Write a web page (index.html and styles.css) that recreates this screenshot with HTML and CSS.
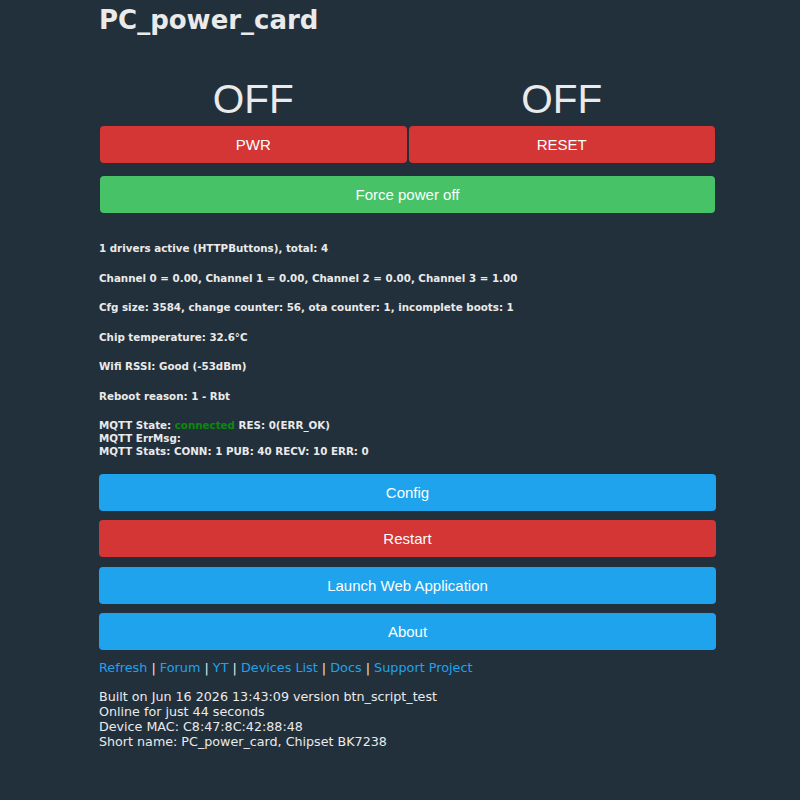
FILE: index.html
```html
<!DOCTYPE html>
<html>
<head>
<meta charset="utf-8">
<link rel="stylesheet" href="styles.css">
</head>
<body>
<div class="wrap">
  <h3 class="title">PC_power_card</h3>
  <div class="states">
    <div class="cell">
      <div class="state">OFF</div>
      <button class="btn red">PWR</button>
    </div>
    <div class="cell">
      <div class="state">OFF</div>
      <button class="btn red">RESET</button>
    </div>
  </div>
  <button class="btn green force">Force power off</button>
  <div class="info">
    <p>1 drivers active (HTTPButtons), total: 4</p>
    <p>Channel 0 = 0.00, Channel 1 = 0.00, Channel 2 = 0.00, Channel 3 = 1.00</p>
    <p>Cfg size: 3584, change counter: 56, ota counter: 1, incomplete boots: 1</p>
    <p>Chip temperature: 32.6°C</p>
    <p>Wifi RSSI: Good (-53dBm)</p>
    <p>Reboot reason: 1 - Rbt</p>
    <p>MQTT State: <span class="ok">connected</span> RES: 0(ERR_OK)<br>MQTT ErrMsg: <br>MQTT Stats: CONN: 1 PUB: 40 RECV: 10 ERR: 0</p>
  </div>
  <div class="menu">
    <button class="btn blue">Config</button>
    <button class="btn red">Restart</button>
    <button class="btn blue">Launch Web Application</button>
    <button class="btn blue">About</button>
  </div>
  <div class="links">
    <a href="#">Refresh</a> | <a href="#">Forum</a> | <a href="#">YT</a> | <a href="#">Devices List</a> | <a href="#">Docs</a> | <a href="#">Support Project</a>
  </div>
  <div class="footer">
    Built on Jun 16 2026 13:43:09 version btn_script_test<br>
    Online for just 44 seconds<br>
    Device MAC: C8:47:8C:42:88:48<br>
    Short name: PC_power_card, Chipset BK7238
  </div>
</div>
</body>
</html>
```
FILE: styles.css
```css
html, body {
  margin: 0;
  padding: 0;
  background: #22303c;
}
body {
  color: #eaeaea;
  font-family: "DejaVu Sans", Verdana, sans-serif;
}
.wrap {
  width: 617px;
  margin-left: 99px;
  padding-top: 4px;
}
.title {
  margin: 0;
  font-size: 26px;
  font-weight: bold;
  line-height: 32px;
  color: #eaeaea;
}
.states {
  display: grid;
  grid-template-columns: 1fr 1fr;
  gap: 2px;
  margin-top: 38px;
  padding: 0 1px;
}
.cell {
  display: flex;
  flex-direction: column;
  align-items: stretch;
}
.state {
  font-family: "Liberation Sans", Arial, sans-serif;
  font-size: 40.5px;
  line-height: 50px;
  text-align: center;
  color: #eaeaea;
  margin-bottom: 2px;
}
.btn {
  display: block;
  width: 100%;
  height: 37px;
  border: 0;
  border-radius: 4px;
  color: #faffff;
  font-family: "Liberation Sans", Arial, sans-serif;
  font-size: 15px;
  padding: 0;
  cursor: pointer;
}
.red { background: #d43535; }
.green { background: #47c266; }
.blue { background: #1fa3ec; }
.force {
  width: 615px;
  margin: 13px 1px 0;
}
.info {
  margin-top: 29px;
  font-size: 10.3px;
  font-weight: bold;
  line-height: 13px;
}
.info p {
  margin: 0 0 16.5px;
}
.ok { color: #0a8a0a; }
.menu {
  display: flex;
  flex-direction: column;
  gap: 9.5px;
  margin-top: -1px;
}
.links {
  margin-top: 10px;
  font-size: 12.8px;
  line-height: 16px;
}
.links a {
  color: #1fa3ec;
  text-decoration: none;
}
.footer {
  margin-top: 13px;
  font-size: 12.7px;
  line-height: 15px;
}
```
